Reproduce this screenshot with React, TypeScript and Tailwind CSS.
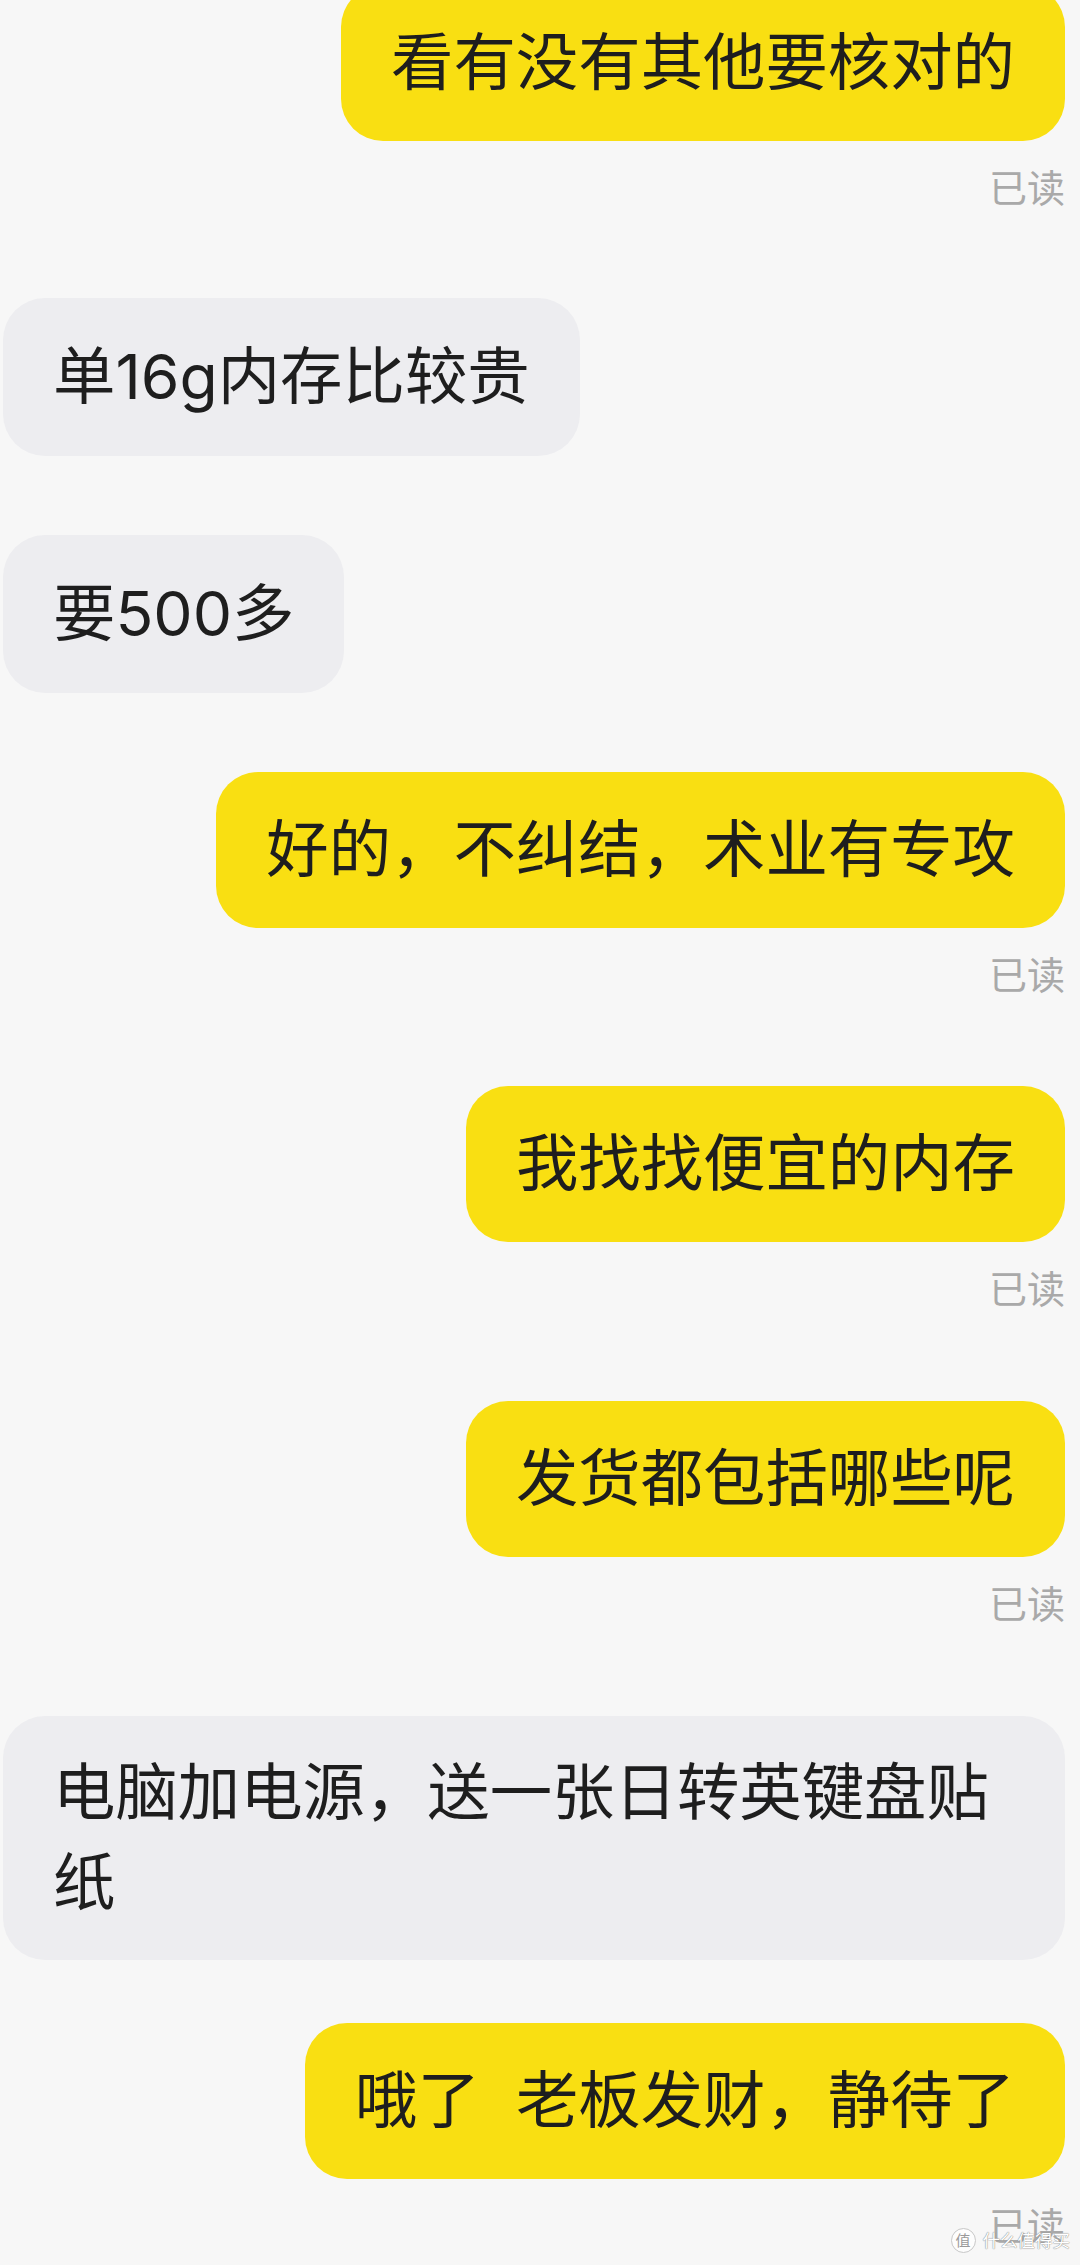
import React from "react";

type Side = "in" | "out";

function Bubble({ side, py, children }: { side: Side; py: string; children: React.ReactNode }) {
  const color = side === "out" ? "bg-[#f9df12]" : "bg-[#ededf0]";
  return (
    <div className={side === "out" ? "flex justify-end" : "flex justify-start"}>
      <div
        className={`${color} ${py} max-w-full rounded-[42px] px-[50px] text-[62.4px] leading-[90px] text-[#1e1e1e]`}
      >
        {children}
      </div>
    </div>
  );
}

function Read() {
  return (
    <div className="flex justify-end pt-[22px] text-[38px] leading-[50px] text-[#a9a9a9]">已读</div>
  );
}

export default function App() {
  return (
    <div className="relative h-[2265px] w-[1080px] overflow-hidden bg-[#f7f7f7] pl-[3px] pr-[15px] font-['Inter','Noto_Sans_CJK_SC',sans-serif]">
      <div className="flex flex-col">
        <div className="mt-[-15px]">
          <Bubble side="out" py="py-[33px]">看有没有其他要核对的</Bubble>
          <Read />
        </div>
        <div className="mt-[85px]">
          <Bubble side="in" py="py-[34px]">单16g内存比较贵</Bubble>
        </div>
        <div className="mt-[79px]">
          <Bubble side="in" py="py-[34px]">要500多</Bubble>
        </div>
        <div className="mt-[79px]">
          <Bubble side="out" py="py-[33px]">好的，不纠结，术业有专攻</Bubble>
          <Read />
        </div>
        <div className="mt-[86px]">
          <Bubble side="out" py="py-[33px]">我找找便宜的内存</Bubble>
          <Read />
        </div>
        <div className="mt-[87px]">
          <Bubble side="out" py="py-[33px]">发货都包括哪些呢</Bubble>
          <Read />
        </div>
        <div className="mt-[87px]">
          <Bubble side="in" py="py-[32px]">电脑加电源，送一张日转英键盘贴纸</Bubble>
        </div>
        <div className="mt-[63px]">
          <Bubble side="out" py="py-[33px]">
            哦了<span className="inline-block w-[36px]"> </span>老板发财，静待了
          </Bubble>
          <Read />
        </div>
      </div>

      <div className="absolute bottom-[12px] right-[10px] flex items-center gap-[7px]">
        <div className="flex h-[25px] w-[25px] items-center justify-center rounded-full border border-[#c8c8c8] bg-white/70 text-[15px] leading-none text-[#9a9a9a]">
          值
        </div>
        <div className="text-[17.5px] leading-none text-white [text-shadow:0_0_1px_#888,0_0_1px_#888]">
          什么值得买
        </div>
      </div>
    </div>
  );
}
